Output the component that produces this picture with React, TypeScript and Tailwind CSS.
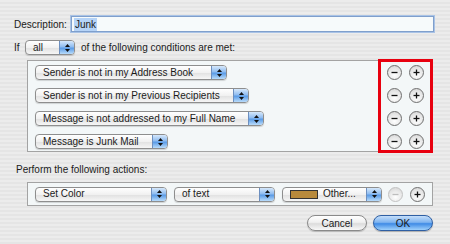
import React from "react";

const font = "font-['Liberation_Sans',Arial,sans-serif]";

function Arrows() {
  return (
    <svg width="7" height="10" viewBox="0 0 7 10" aria-hidden="true">
      <path d="M3.5 1 L6 4 L1 4 Z" fill="#111" />
      <path d="M3.5 9 L6 6 L1 6 Z" fill="#111" />
    </svg>
  );
}

function Popup({ label, width, swatch }: { label: string; width: number; swatch?: boolean }) {
  return (
    <div
      className="flex h-[15px] shrink-0 items-stretch overflow-hidden rounded-[4px] border border-[#8e8e8e] bg-[linear-gradient(#ffffff,#f1f1f1_50%,#e2e2e2_55%,#f6f6f6)] shadow-[0_1px_1px_rgba(0,0,0,0.15)]"
      style={{ width }}
    >
      <div className="flex flex-1 items-center gap-[5px] whitespace-nowrap pl-[7px] leading-none">
        {swatch && <span className="h-[9px] w-[28px] border border-[#333] bg-[#b88a3c]" />}
        <span>{label}</span>
      </div>
      <div className="flex w-[15px] items-center justify-center border-l border-[#6d8fbf] bg-[linear-gradient(#d6e8fb,#8fbcf0_45%,#5a9be6_55%,#b9dcfb)]">
        <Arrows />
      </div>
    </div>
  );
}

function Circle({ sign, faded }: { sign: "-" | "+"; faded?: boolean }) {
  return (
    <div
      className={`flex h-[15px] w-[15px] items-center justify-center rounded-full border bg-[radial-gradient(circle_at_50%_70%,#ffffff,#e6e6e6_60%,#cfcfcf)] ${
        faded ? "border-[#c2c2c2]" : "border-[#6f6f6f]"
      }`}
    >
      <svg width="9" height="9" viewBox="0 0 9 9" aria-hidden="true">
        <path d="M1.5 4.5 H7.5" stroke={faded ? "#bdbdbd" : "#111"} strokeWidth="1.3" />
        {sign === "+" && <path d="M4.5 1.5 V7.5" stroke="#111" strokeWidth="1.3" />}
      </svg>
    </div>
  );
}

const conditions = [
  { label: "Sender is not in my Address Book", width: 192 },
  { label: "Sender is not in my Previous Recipients", width: 214 },
  { label: "Message is not addressed to my Full Name", width: 229 },
  { label: "Message is Junk Mail", width: 133 },
];

export default function App() {
  return (
    <div
      className={`h-[244px] w-[450px] overflow-hidden whitespace-nowrap bg-[repeating-linear-gradient(#ececec_0px,#ececec_2px,#e5e5e5_2px,#e5e5e5_4px)] text-[10px] text-[#1b1b1b] ${font}`}
    >
      <div className="flex items-center pl-[14px] pt-[16px]">
        <span className="w-[57px]">Description:</span>
        <div className="flex h-[16px] w-[363px] items-center border border-[#7f9fcc] bg-[#f6fafb] pl-[2px] shadow-[0_0_0_1px_#a9c3e6]">
          <span className="bg-[#b5d3f7] px-[1px] leading-[13px]">Junk</span>
        </div>
      </div>

      <div className="mt-[8px] flex items-center pl-[14px]">
        <span className="w-[11px]">If</span>
        <Popup label="all" width={50} />
        <span className="ml-[6px]">of the following conditions are met:</span>
      </div>

      <div className="relative ml-[27px] mt-[5px] flex h-[92px] w-[406px] border border-[#a3a3a3] bg-[#f3f7f8]">
        <div className="flex flex-1 flex-col gap-[8px] pl-[7px] pt-[4px]">
          {conditions.map((c) => (
            <Popup key={c.label} label={c.label} width={c.width} />
          ))}
        </div>
        <div className="flex flex-col gap-[8px] pr-[8px] pt-[4px]">
          {conditions.map((c) => (
            <div key={c.label} className="flex gap-[7px]">
              <Circle sign="-" />
              <Circle sign="+" />
            </div>
          ))}
        </div>
        <div className="pointer-events-none absolute -bottom-[2px] -right-[1px] -top-[2px] w-[55px] border-[3px] border-[#e8000f]" />
      </div>

      <div className="ml-[16px] mt-[10px]">Perform the following actions:</div>

      <div className="ml-[27px] mt-[5px] flex h-[24px] w-[406px] items-center border border-[#a3a3a3] bg-[#f3f7f8] pl-[7px] pr-[5px]">
        <Popup label="Set Color" width={132} />
        <div className="ml-[7px]">
          <Popup label="of text" width={101} />
        </div>
        <div className="ml-[7px]">
          <Popup label="Other..." width={100} swatch />
        </div>
        <div className="ml-[6px] flex gap-[7px]">
          <Circle sign="-" faded />
          <Circle sign="+" />
        </div>
      </div>

      <div className="mr-[17px] mt-[9px] flex justify-end gap-[6px]">
        <button className="flex h-[16px] w-[60px] items-center justify-center rounded-full border border-[#8a8a8a] bg-[linear-gradient(#ffffff,#f0f0f0_45%,#dcdcdc_55%,#f8f8f8)] text-[10px] shadow-[0_1px_1px_rgba(0,0,0,0.2)]">
          Cancel
        </button>
        <button className="flex h-[16px] w-[60px] items-center justify-center rounded-full border border-[#2f5fa3] bg-[linear-gradient(#c4defa,#7fb4f0_45%,#3f8be6_55%,#9fd1fb)] text-[10px] shadow-[0_1px_1px_rgba(0,0,0,0.25)]">
          OK
        </button>
      </div>
    </div>
  );
}
